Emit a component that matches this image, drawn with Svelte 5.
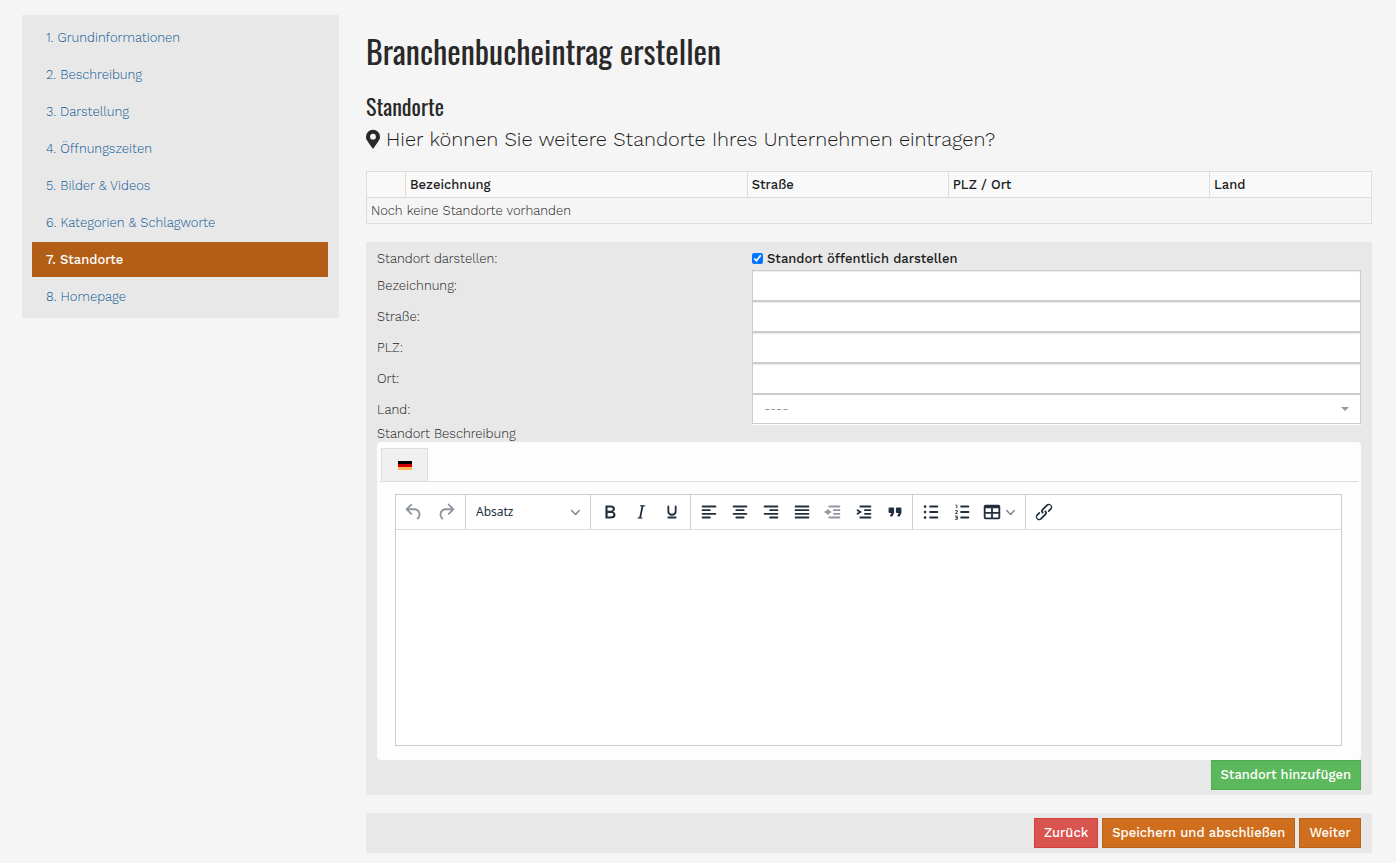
<script lang="ts">
    const steps = [
        'Grundinformationen',
        'Beschreibung',
        'Darstellung',
        'Öffnungszeiten',
        'Bilder & Videos',
        'Kategorien & Schlagworte',
        'Standorte',
        'Homepage'
    ];
    const current = 6;

    const fields = [
        { id: 'name', label: 'Bezeichnung:' },
        { id: 'street', label: 'Straße:' },
        { id: 'zip', label: 'PLZ:' },
        { id: 'city', label: 'Ort:' }
    ];

    // toolbar icons, 24x24; "line" is stroked, "fill" is filled
    const undo = {
        title: 'Rückgängig',
        off: true,
        fill: 'M6.4 8H12c3.7 0 6.2 2 6.8 5.1.6 2.7-.4 5.6-2.3 6.8a1 1 0 01-1-1.8c1.1-.6 1.8-2.7 1.4-4.6-.5-2.1-2.1-3.5-4.9-3.5H6.4l3.3 3.3a1 1 0 11-1.4 1.4l-5-5a1 1 0 010-1.4l5-5a1 1 0 011.4 1.4L6.4 8z'
    };
    const redo = {
        title: 'Wiederholen',
        off: true,
        fill: 'M17.6 10H12c-2.8 0-4.4 1.4-4.9 3.5-.4 2 .3 4 1.4 4.6a1 1 0 11-1 1.8c-2-1.2-2.9-4.1-2.3-6.8.6-3 3-5.1 6.8-5.1h5.6l-3.3-3.3a1 1 0 111.4-1.4l5 5a1 1 0 010 1.4l-5 5a1 1 0 01-1.4-1.4l3.3-3.3z'
    };
    const format = [
        {
            title: 'Fett',
            fill: 'M7.8 19c-.3 0-.5 0-.6-.2l-.2-.5V5.7c0-.2 0-.4.2-.5l.6-.2h5c1.5 0 2.7.3 3.5 1 .7.6 1.1 1.4 1.1 2.5a3 3 0 01-.6 1.9c-.4.6-1 1-1.6 1.2.4.1.9.3 1.3.6s.8.7 1 1.2c.4.4.5 1 .5 1.6 0 1.3-.4 2.3-1.3 3-.8.7-2.1 1-3.8 1H7.8zm5-8.3c.6 0 1.2-.1 1.6-.5.4-.3.6-.7.6-1.3 0-1.1-.8-1.7-2.3-1.7H9.3v3.5h3.4zm.5 6c.7 0 1.3-.1 1.7-.4.4-.4.6-.9.6-1.5s-.2-1-.7-1.4c-.4-.3-1-.4-2-.4H9.4v3.8h4z'
        },
        {
            title: 'Kursiv',
            fill: 'M16.7 4.7l-.1.9h-.3c-.6 0-1 0-1.4.3-.3.3-.4.6-.5 1.1l-2.1 9.8v.6c0 .5.4.8 1.4.8h.2l-.2.8H8l.2-.8h.2c1.1 0 1.8-.5 2-1.5l2-9.8.1-.5c0-.6-.4-.8-1.4-.8h-.3l.2-.9h5.8z'
        },
        {
            title: 'Unterstrichen',
            fill: 'M16 5c.6 0 1 .4 1 1v5.5a4 4 0 01-.4 1.8l-1 1.4a5.3 5.3 0 01-5.5 1 5 5 0 01-1.6-1c-.5-.4-.8-.9-1.1-1.4a4 4 0 01-.4-1.8V6c0-.6.4-1 1-1s1 .4 1 1v5.5c0 .3 0 .6.2 1l.6.7a3.3 3.3 0 002.2.8 3.4 3.4 0 002.2-.8c.3-.2.4-.5.6-.8l.2-.9V6c0-.6.4-1 1-1zM8 17h8c.6 0 1 .4 1 1s-.4 1-1 1H8a1 1 0 010-2z'
        }
    ];
    const align = [
        { title: 'Linksbündig', line: 'M5 6h14M5 10h8M5 14h14M5 18h8' },
        { title: 'Zentriert', line: 'M5 6h14M8 10h8M5 14h14M8 18h8' },
        { title: 'Rechtsbündig', line: 'M5 6h14M11 10h8M5 14h14M11 18h8' },
        { title: 'Blocksatz', line: 'M5 6h14M5 10h14M5 14h14M5 18h14' },
        { title: 'Ausrücken', off: true, line: 'M8 6h11M13 10h6M13 14h6M8 18h11M7 10l-3 2 3 2M5 12h4' },
        { title: 'Einrücken', line: 'M8 6h11M13 10h6M13 14h6M8 18h11M5 10l3 2-3 2' },
        {
            title: 'Zitat',
            fill: 'M7.5 17h.9c.4 0 .7-.2.9-.6L11 13V8c0-.6-.4-1-1-1H6a1 1 0 00-1 1v4c0 .6.4 1 1 1h2l-1.3 2.7a1 1 0 00.8 1.3zm8 0h.9c.4 0 .7-.2.9-.6L19 13V8c0-.6-.4-1-1-1h-4a1 1 0 00-1 1v4c0 .6.4 1 1 1h2l-1.3 2.7a1 1 0 00.8 1.3z'
        }
    ];
    const lists = [
        {
            title: 'Aufzählung',
            line: 'M11 6h8M11 12h8M11 18h8',
            fill: 'M4 6a1.500 1.500 0 103 0 1.500 1.500 0 10-3 0zM4 12a1.500 1.500 0 103 0 1.500 1.500 0 10-3 0zM4 18a1.500 1.500 0 103 0 1.500 1.500 0 10-3 0z'
        },
        {
            title: 'Nummerierte Liste',
            line: 'M11 6h8M11 12h8M11 18h8',
            thin: 'M5 4.500h1.400V8M4.500 10.500h2.400v1.500l-2 1.700h2.300M4.500 16.500h2.400v3.500h-2.400M5 18.200h1.900'
        }
    ];
    const table = {
        title: 'Tabelle',
        fill: 'M19 4a2 2 0 012 2v12a2 2 0 01-2 2H5a2 2 0 01-2-2V6c0-1.100.9-2 2-2h14zM5 14v4h6v-4H5zm14 0h-6v4h6v-4zm0-6h-6v4h6V8zM5 12h6V8H5v4z'
    };
    const link = {
        title: 'Link',
        fill: 'M6.2 12.3a1 1 0 011.4 1.4l-2.1 2a2 2 0 102.7 2.8l4.8-4.8a1 1 0 000-1.4 1 1 0 111.4-1.3 2.9 2.9 0 010 4L9.6 20a3.9 3.9 0 01-5.5-5.5l2-2zm11.6-.6a1 1 0 01-1.4-1.4l2-2a2 2 0 10-2.6-2.8L11 10.3a1 1 0 000 1.4A1 1 0 119.6 13a2.9 2.9 0 010-4L14.4 4a3.9 3.9 0 015.5 5.5l-2 2z'
    };

    let visible = $state(true);
</script>

{#snippet chevron()}
    <svg class="chevron" viewBox="0 0 10 10" aria-hidden="true">
        <path d="M8.7 2.2c.3-.3.8-.3 1 0 .4.4.4.9 0 1.2L5.7 7.8c-.3.3-.9.3-1.2 0L.2 3.4a.8.8 0 010-1.2c.3-.3.8-.3 1.100 0L5 6l3.700-3.800z" />
    </svg>
{/snippet}

{#snippet tool(icon: any, menu = false)}
    <button type="button" class="tool" class:menu class:off={icon.off} aria-label={icon.title}>
        <svg class="icon" viewBox="0 0 24 24" aria-hidden="true">
            {#if icon.fill}<path d={icon.fill} fill-rule="evenodd" />{/if}
            {#if icon.line}<path d={icon.line} class="line" />{/if}
            {#if icon.thin}<path d={icon.thin} class="line thin" />{/if}
        </svg>
        {#if menu}{@render chevron()}{/if}
    </button>
{/snippet}

<div class="page">
    <nav class="steps">
        {#each steps as step, i}
            <a href="#schritt-{i + 1}" class:active={i === current}>{i + 1}. {step}</a>
        {/each}
    </nav>

    <main>
        <h1>Branchenbucheintrag erstellen</h1>
        <h2>Standorte</h2>
        <p class="lead">
            <svg class="marker" viewBox="0 0 384 512" aria-hidden="true">
                <path d="M172 502C27 291 0 270 0 192a192 192 0 01384 0c0 78-27 99-172 310a24 24 0 01-40 0zm20-230a80 80 0 100-160 80 80 0 000 160z" />
            </svg>
            Hier können Sie weitere Standorte Ihres Unternehmen eintragen?
        </p>

        <table>
            <thead>
                <tr>
                    <th class="c-action"></th>
                    <th class="c-name">Bezeichnung</th>
                    <th class="c-street">Straße</th>
                    <th class="c-city">PLZ / Ort</th>
                    <th>Land</th>
                </tr>
            </thead>
            <tbody>
                <tr>
                    <td colspan="5">Noch keine Standorte vorhanden</td>
                </tr>
            </tbody>
        </table>

        <form class="panel">
            <div class="row first">
                <span>Standort darstellen:</span>
                <label class="check">
                    <input type="checkbox" bind:checked={visible} />
                    Standort öffentlich darstellen
                </label>
            </div>
            {#each fields as field}
                <div class="row">
                    <label for={field.id}>{field.label}</label>
                    <input type="text" class="control" id={field.id} />
                </div>
            {/each}
            <div class="row">
                <label for="country">Land:</label>
                <div class="select">
                    <select class="control" id="country">
                        <option>----</option>
                    </select>
                </div>
            </div>
            <label class="caption" for="description">Standort Beschreibung</label>

            <div class="editor">
                <div class="tabs">
                    <button type="button" class="tab" aria-label="Deutsch">
                        <svg class="flag" viewBox="0 0 14 9" aria-hidden="true">
                            <rect width="14" height="3" fill="#000" />
                            <rect y="3" width="14" height="3" fill="#d00000" />
                            <rect y="6" width="14" height="3" fill="#ffb85c" />
                        </svg>
                    </button>
                </div>
                <div class="rich">
                    <div class="toolbar">
                        <div class="group history">
                            {@render tool(undo)}
                            {@render tool(redo)}
                        </div>
                        <div class="group blocks">
                            <button type="button" class="block-select">
                                Absatz
                                {@render chevron()}
                            </button>
                        </div>
                        <div class="group format">
                            {#each format as icon}{@render tool(icon)}{/each}
                        </div>
                        <div class="group">
                            {#each align as icon}{@render tool(icon)}{/each}
                        </div>
                        <div class="group">
                            {#each lists as icon}{@render tool(icon)}{/each}
                            {@render tool(table, true)}
                        </div>
                        <div class="group last">
                            {@render tool(link)}
                        </div>
                    </div>
                    <textarea id="description"></textarea>
                </div>
            </div>
            <div class="actions">
                <button type="button" class="btn success">Standort hinzufügen</button>
            </div>
        </form>

        <div class="panel footer">
            <button type="button" class="btn danger">Zurück</button>
            <button type="button" class="btn primary">Speichern und abschließen</button>
            <button type="button" class="btn primary">Weiter</button>
        </div>
    </main>
</div>

<style>
    :global(body) {
        margin: 0;
        background: #f5f5f5;
    }
    .page,
    .page * {
        box-sizing: border-box;
    }
    .page {
        display: grid;
        grid-template-columns: 317fr 1006fr;
        gap: 27px;
        align-items: start;
        padding: 15px 24px 10px 22px;
        color: #1c1c1c;
        font: 300 13px/18px 'Work Sans', Inter, sans-serif;
    }
    button,
    input,
    select,
    textarea {
        font: inherit;
        color: inherit;
        margin: 0;
    }

    .steps {
        display: flex;
        flex-direction: column;
        gap: 2px;
        padding: 5px 11px 4px 10px;
        background: #e8e8e8;
    }
    .steps a {
        padding: 9px 14px 8px;
        color: #0f5896;
        text-decoration: none;
    }
    .steps a.active {
        background: #b35e17;
        color: #fff;
        font-weight: 500;
    }

    main {
        min-width: 0;
    }
    h1,
    h2 {
        margin: 0;
        color: #292929;
        font-family: Oswald, 'Liberation Sans Narrow', 'Open Sans', sans-serif;
        font-weight: 400;
    }
    h1 {
        padding-top: 14px;
        font-size: 32px;
        line-height: 44px;
    }
    h2 {
        padding-top: 17px;
        font-size: 22px;
        line-height: 32px;
    }
    .lead {
        display: flex;
        align-items: center;
        gap: 6px;
        margin: 5px 0 20px;
        font-size: 20px;
        line-height: 24px;
    }
    .marker {
        width: 14px;
        height: 20px;
        fill: #292929;
    }

    table {
        width: 100%;
        border-collapse: collapse;
        table-layout: fixed;
    }
    th,
    td {
        height: 26px;
        padding: 0 4px;
        border: 1px solid #ddd;
        text-align: left;
    }
    th {
        background: #f9f9f9;
        font-weight: 500;
    }
    .c-action {
        width: 39px;
    }
    .c-name {
        width: 34%;
    }
    .c-street {
        width: 20%;
    }
    .c-city {
        width: 26%;
    }

    .panel {
        margin-top: 18px;
        padding: 5px 11px;
        background: #e8e8e8;
    }
    .row {
        display: grid;
        grid-template-columns: 375fr 609fr;
        align-items: center;
        min-height: 31px;
    }
    .row.first {
        min-height: 23px;
    }
    .check {
        display: flex;
        align-items: center;
        gap: 4px;
        font-weight: 500;
    }
    .check input {
        width: 11px;
        height: 11px;
    }
    .control {
        display: block;
        width: 100%;
        height: 31px;
        padding: 0 11px;
        border: 1px solid #ccc;
        border-radius: 0;
        background: #fff;
        box-shadow: inset 0 1px 1px rgba(0, 0, 0, 0.08);
    }
    .select {
        position: relative;
        height: 31px;
    }
    .select::after {
        content: '';
        position: absolute;
        top: 13px;
        right: 12px;
        border: 4px solid transparent;
        border-top-color: #999;
        border-bottom: 0;
    }
    select.control {
        height: 30px;
        appearance: none;
        color: #777;
        box-shadow: 0 1px #fff;
    }
    .caption {
        display: block;
        line-height: 17px;
    }

    .editor {
        padding: 6px 3px 14px;
        border-radius: 4px;
        background: #fdfdfd;
    }
    .tabs {
        display: flex;
        padding-left: 1px;
        border-bottom: 1px solid #ddd;
    }
    .tab {
        display: flex;
        align-items: center;
        justify-content: center;
        width: 47px;
        height: 33px;
        padding: 0;
        border: 1px solid #ddd;
        border-bottom: 0;
        background: #f0f0f0;
    }
    .flag {
        width: 14px;
        height: 9px;
    }
    .rich {
        margin: 12px 16px 0 15px;
        border: 1px solid #ccc;
        background: #fff;
    }
    .toolbar {
        display: flex;
        height: 35px;
        border-bottom: 1px solid #ddd;
    }
    .group {
        display: flex;
        padding: 0 2px;
        border-right: 1px solid #ccc;
    }
    .group.history {
        padding-right: 3px;
    }
    .group.history .tool {
        width: 32px;
    }
    .group.blocks {
        padding: 0;
    }
    .group.format {
        padding: 0 3px;
    }
    .group.last {
        border: 0;
    }
    .tool {
        display: flex;
        align-items: center;
        justify-content: center;
        width: 31px;
        padding: 0;
        border: 0;
        background: none;
    }
    .tool.menu {
        justify-content: flex-start;
        gap: 3px;
        width: 46px;
        padding-left: 4px;
    }
    .icon {
        flex: none;
        width: 22px;
        height: 22px;
        fill: #222f3e;
        stroke: #222f3e;
        stroke-width: 0;
    }
    .off .icon {
        opacity: 0.5;
    }
    .line {
        fill: none;
        stroke-width: 2;
        stroke-linecap: round;
    }
    .thin {
        stroke-width: 1;
        stroke-linecap: butt;
    }
    .chevron {
        flex: none;
        width: 9px;
        height: 9px;
        fill: #222f3e;
        opacity: 0.6;
    }
    .block-select {
        display: flex;
        align-items: center;
        justify-content: space-between;
        width: 124px;
        padding: 0 10px;
        border: 0;
        background: none;
        color: #222f3e;
        font: 12px/18px 'Segoe UI', 'Noto Sans', sans-serif;
    }
    textarea {
        display: block;
        width: 100%;
        height: 215px;
        padding: 14px;
        border: 0;
        resize: none;
        background: #fff;
    }

    .actions,
    .footer {
        display: flex;
        justify-content: flex-end;
        gap: 4px;
    }
    .btn {
        height: 30px;
        padding: 0 9px;
        border: 1px solid;
        color: #fff;
        font-weight: 500;
    }
    .success {
        background: #5cb85c;
        border-color: #4cae4c;
    }
    .danger {
        background: #d9534f;
        border-color: #d43f3a;
    }
    .primary {
        background: #cf6e1d;
        border-color: #b9621a;
    }
</style>
